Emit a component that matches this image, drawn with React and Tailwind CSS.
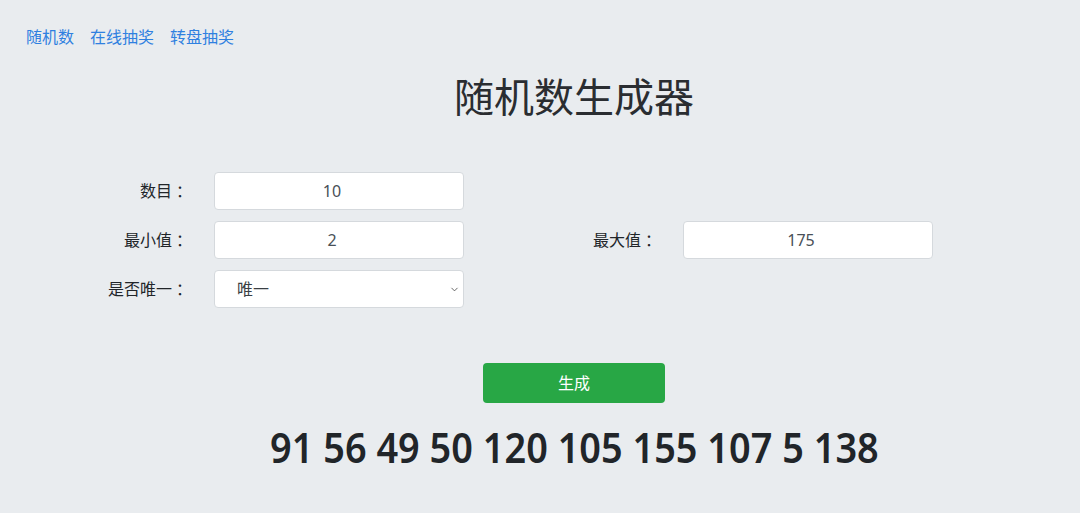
import { useState } from "react";
import { ChevronDown } from "lucide-react";

const navLinks = ["随机数", "在线抽奖", "转盘抽奖"];

function FieldLabel({ text }) {
  return (
    <label className="flex h-[38px] items-center justify-end pr-[22px]">
      {text}
      <span className="ml-[4px]">：</span>
    </label>
  );
}

export default function App() {
  const [count, setCount] = useState("10");
  const [min, setMin] = useState("2");
  const [max, setMax] = useState("175");
  const [unique, setUnique] = useState("唯一");
  const [result] = useState([91, 56, 49, 50, 120, 105, 155, 107, 5, 138]);

  return (
    <div className="min-h-screen bg-[#e9ecef] text-[#212529] font-['Noto_Sans','Noto_Sans_CJK_SC',sans-serif]">
      <nav className="flex gap-[16px] pl-[26px] pt-[26px] text-[16px] leading-[22px]">
        {navLinks.map((link) => (
          <a key={link} href="#" className="text-[#2f80e0]">
            {link}
          </a>
        ))}
      </nav>

      <div className="pl-[68px]">
        <h1 className="mt-[25px] text-center text-[40px] leading-[48px] font-normal text-[#2a2d31]">
          随机数生成器
        </h1>

        <form
          className="mt-[51px] grid grid-cols-[146px_250px_219px_250px] gap-y-[11px] text-[16px]"
          onSubmit={(e) => e.preventDefault()}
        >
          <FieldLabel text="数目" />
          <input
            type="text"
            className="h-[38px] rounded-[4px] border border-[#d5d9dd] bg-white pl-3 pr-[26px] text-center text-[#495057] outline-none"
            value={count}
            onChange={(e) => setCount(e.target.value.replace(/\D/g, ""))}
          />
          <div />
          <div />

          <FieldLabel text="最小值" />
          <input
            type="text"
            className="h-[38px] rounded-[4px] border border-[#d5d9dd] bg-white pl-3 pr-[26px] text-center text-[#495057] outline-none"
            value={min}
            onChange={(e) => setMin(e.target.value.replace(/\D/g, ""))}
          />
          <FieldLabel text="最大值" />
          <input
            type="text"
            className="h-[38px] rounded-[4px] border border-[#d5d9dd] bg-white pl-3 pr-[26px] text-center text-[#495057] outline-none"
            value={max}
            onChange={(e) => setMax(e.target.value.replace(/\D/g, ""))}
          />

          <FieldLabel text="是否唯一" />
          <div className="relative">
            <select
              className="h-[38px] w-full appearance-none rounded-[4px] border border-[#d5d9dd] bg-white pl-[22px] text-[#3a3f44] outline-none"
              value={unique}
              onChange={(e) => setUnique(e.target.value)}
            >
              <option>唯一</option>
              <option>可重复</option>
            </select>
            <ChevronDown
              size={11}
              strokeWidth={1.75}
              className="pointer-events-none absolute right-[4px] top-[14px] text-[#444]"
            />
          </div>
          <div />
          <div />
        </form>

        <button
          type="button"
          className="mx-auto mt-[55px] block h-[40px] w-[182px] rounded-[4px] bg-[#28a745] text-[16px] text-white"
        >
          生成
        </button>

        <div className="mt-[20px] flex justify-center">
          <p className="origin-center scale-x-[0.924] whitespace-nowrap text-[41px] leading-[48px] font-semibold text-[#212529]">
            {result.join(" ")}
          </p>
        </div>
      </div>
    </div>
  );
}
